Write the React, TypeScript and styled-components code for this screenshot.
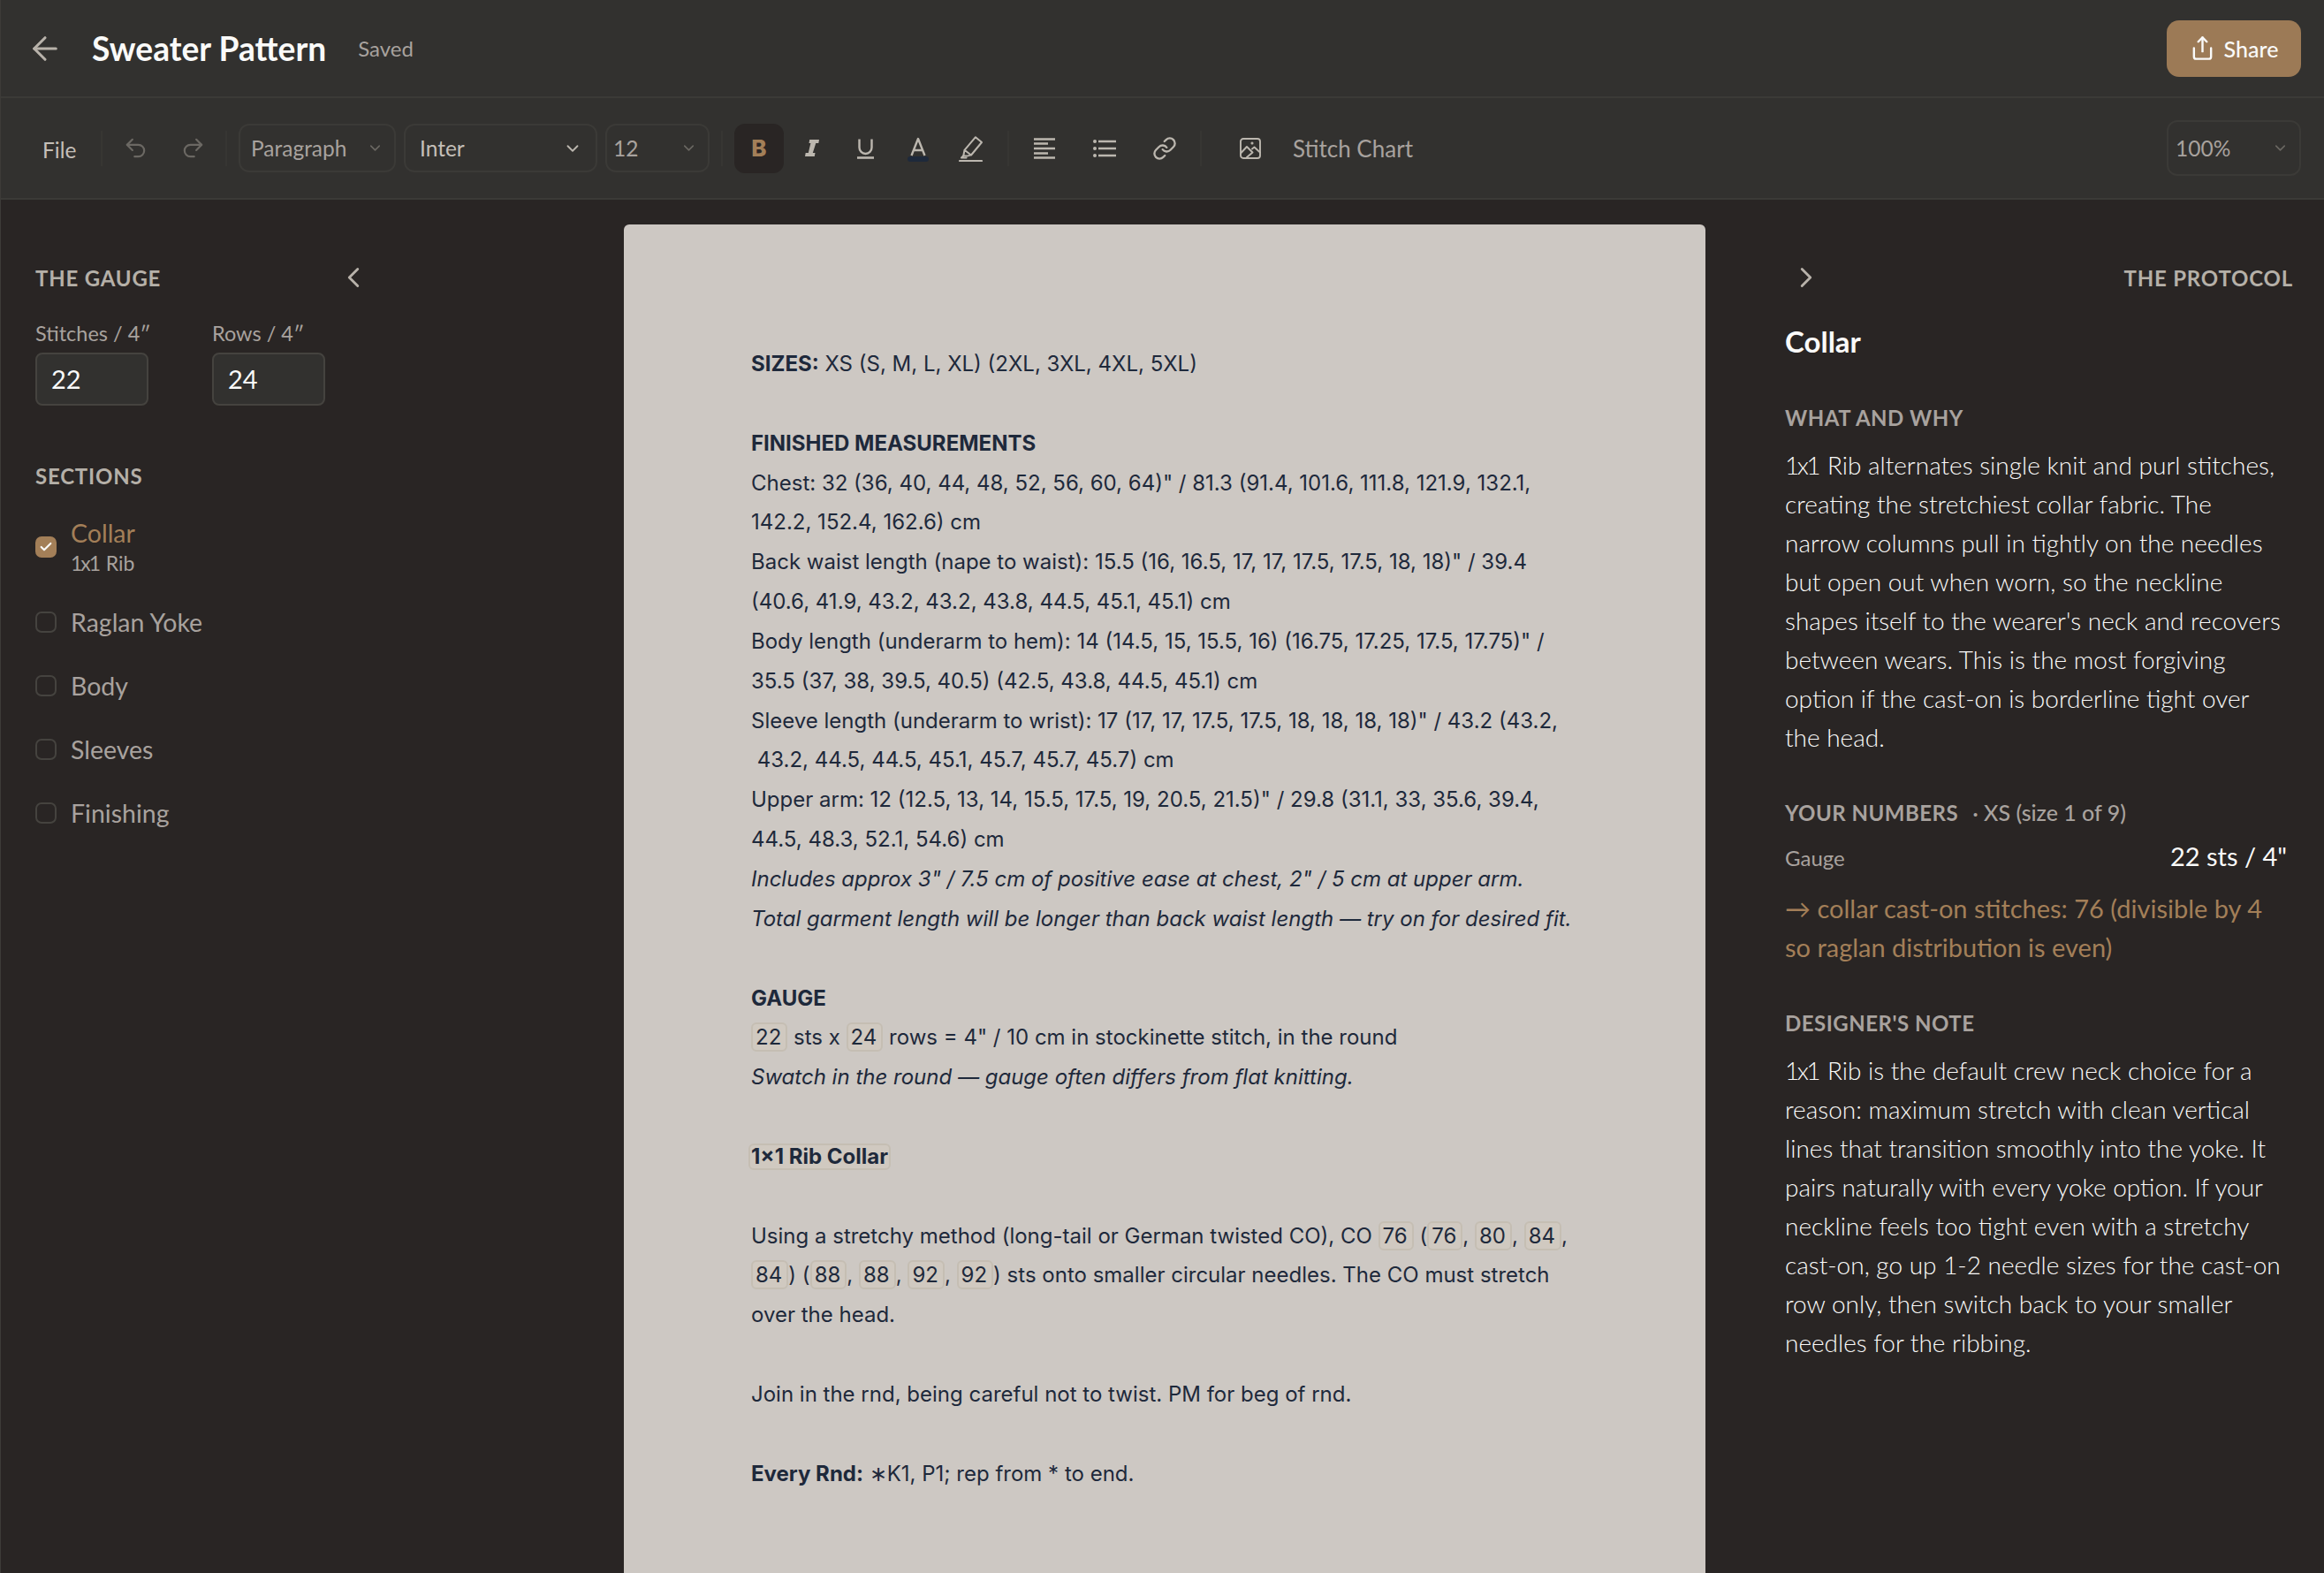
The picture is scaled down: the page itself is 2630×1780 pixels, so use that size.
import * as React from "react";
import styled, { createGlobalStyle } from "styled-components";
import {
  ArrowLeft,
  Check,
  ChevronDown,
  ChevronLeft,
  ChevronRight,
  Link,
  Redo2,
  Share,
  Undo2,
} from "lucide-react";

const UI_FONT = `Lato, "Noto Sans", sans-serif`;
const ACCENT = "#a37f58";

const GlobalStyle = createGlobalStyle`
  html, body {
    margin: 0;
    padding: 0;
    height: 100%;
    background: #292524;
    overflow: hidden;
  }
  * {
    box-sizing: border-box;
  }
`;

const Page = styled.div`
  height: 100vh;
  display: flex;
  flex-direction: column;
  overflow: hidden;
  border-left: 1px solid #3d3b38;
  font-family: ${UI_FONT};
  color: #e7e5e4;
`;

const Header = styled.header`
  height: 111px;
  flex: none;
  display: flex;
  align-items: center;
  padding: 0 26px 0 29px;
  background: #32312f;
  border-bottom: 2px solid #3b3a37;
`;

const BackButton = styled.span`
  display: flex;
  color: #b8b2aa;
  margin-right: 32px;
`;

const Title = styled.h1`
  margin: 0;
  font-size: 37.2px;
  font-weight: 700;
  color: #fafaf9;
`;

const SavedLabel = styled.span`
  margin-left: 36px;
  font-size: 24px;
  color: #a8a29e;
`;

const Spacer = styled.div`
  flex: 1;
`;

const ShareButton = styled.button`
  width: 152px;
  height: 64px;
  border: none;
  border-radius: 14px;
  background: #9c7a56;
  color: #fafaf9;
  display: flex;
  align-items: center;
  justify-content: center;
  gap: 10px;
  font-family: ${UI_FONT};
  font-size: 25px;
  font-weight: 500;
`;

const Toolbar = styled.div`
  height: 115px;
  flex: none;
  display: flex;
  align-items: center;
  padding: 0 26px 0 0;
  background: #32312f;
  border-bottom: 2px solid #3b3a37;
`;

const FileButton = styled.span`
  width: 113px;
  padding-left: 47px;
  font-size: 24.5px;
  color: #c4bfb8;
  position: relative;
  top: 2px;
`;

const Separator = styled.span<{ $gapLeft?: number; $gapRight?: number }>`
  width: 2px;
  height: 40px;
  flex: none;
  background: #373633;
  margin: 0 ${(p) => p.$gapRight ?? 0}px 0 ${(p) => p.$gapLeft ?? 0}px;
`;

const HistoryGroup = styled.div`
  display: flex;
  gap: 9px;
  margin-left: 9px;
  margin-right: 9px;
`;

const ToolGroup = styled.div<{ $gap: number }>`
  display: flex;
  align-items: center;
  gap: ${(p) => p.$gap}px;
`;

const ToolButton = styled.span<{ $active?: boolean; $dim?: boolean }>`
  width: 56px;
  height: 56px;
  flex: none;
  display: flex;
  align-items: center;
  justify-content: center;
  border-radius: 12px;
  background: ${(p) => (p.$active ? "#292524" : "transparent")};
  color: ${(p) => (p.$active ? ACCENT : p.$dim ? "#6b6863" : "#bcb7af")};
`;

const BoldGlyph = styled.span`
  font-family: "Inter", sans-serif;
  font-size: 26px;
  font-weight: 800;
`;

const SelectBox = styled.div<{ $width: number; $height?: number; $bright?: boolean; $pad: number }>`
  width: ${(p) => p.$width}px;
  height: ${(p) => p.$height ?? 55}px;
  flex: none;
  display: flex;
  align-items: center;
  justify-content: space-between;
  padding: 0 ${(p) => (p.$bright ? 15 : 12)}px 0 ${(p) => p.$pad}px;
  border: 2px solid #3b3a37;
  border-radius: 12px;
  font-size: 24.5px;
  color: ${(p) => (p.$bright ? "#c4bfb8" : "#a8a29e")};
  svg {
    color: ${(p) => (p.$bright ? "#bcb7af" : "#6b6863")};
  }
`;

const SelectRow = styled.div`
  display: flex;
  gap: 9px;
  margin-right: 13px;
`;

const ChartLabel = styled.span`
  margin-left: 20px;
  font-size: 26px;
  color: #a8a29e;
`;

const Workspace = styled.div`
  flex: 1;
  min-height: 0;
  display: flex;
  background: #292524;
`;

const LeftPanel = styled.aside`
  width: 705px;
  flex: none;
  padding: 73px 0 0 39px;
`;

const PanelHead = styled.div`
  display: flex;
  align-items: center;
  justify-content: space-between;
  height: 30px;
`;

const LeftHead = styled(PanelHead)`
  width: 379px;
`;

const PanelTitle = styled.h2`
  margin: 0;
  font-size: 24px;
  font-weight: 700;
  letter-spacing: 0.8px;
  color: #b5b0a8;
`;

const ChevronSlot = styled.span`
  display: flex;
  color: #b8b2aa;
`;

const GaugeRow = styled.div`
  display: flex;
  gap: 72px;
  margin-top: 33px;
`;

const GaugeField = styled.label`
  display: flex;
  flex-direction: column;
  width: 128px;
  font-size: 23.5px;
  color: #a8a29e;
  line-height: 30px;
  white-space: nowrap;
`;

const GaugeInput = styled.div`
  height: 60px;
  margin-top: 7px;
  padding-left: 16px;
  display: flex;
  align-items: center;
  background: #32312f;
  border: 2px solid #45433f;
  border-radius: 8px;
  font-size: 29px;
  color: #fafaf9;
`;

const SectionsTitle = styled(PanelTitle)`
  margin-top: 65px;
  line-height: 30px;
`;

const SectionList = styled.ul`
  list-style: none;
  margin: 23px 0 0;
  padding: 0;
  display: flex;
  flex-direction: column;
`;

const SectionItem = styled.li<{ $tall?: boolean }>`
  display: flex;
  align-items: center;
  gap: 16px;
  height: ${(p) => (p.$tall ? 84 : 72)}px;
  margin-bottom: ${(p) => (p.$tall ? 7 : 0)}px;
`;

const CheckBox = styled.span<{ $on?: boolean }>`
  width: 24px;
  height: 24px;
  flex: none;
  display: flex;
  align-items: center;
  justify-content: center;
  border-radius: 7px;
  background: ${(p) => (p.$on ? ACCENT : "transparent")};
  border: ${(p) => (p.$on ? "none" : "2px solid #45433f")};
  color: #fafaf9;
`;

const SectionName = styled.div<{ $on?: boolean }>`
  font-size: 28.5px;
  line-height: 36px;
  color: ${(p) => (p.$on ? ACCENT : "#a8a29e")};
`;

const SectionSub = styled.div`
  font-size: 23px;
  line-height: 32px;
  color: #a8a29e;
`;

// the 1s in the reference face are much narrower than Lato's
const OneByOne = styled.span`
  letter-spacing: -0.09em;
  margin-right: 0.08em;
`;

const Middle = styled.main`
  width: 1224px;
  flex: none;
  padding-top: 28px;
`;

const Paper = styled.article`
  min-height: 1700px;
  padding: 136px 80px 0 144px;
  background: #cdc8c3;
  border-radius: 6px 6px 0 0;
  font-family: Inter, sans-serif;
  font-size: 24px;
  line-height: 44.85px;
  color: #1e293b;
`;

const DocLine = styled.div<{ $em?: boolean; $gap?: boolean }>`
  white-space: pre;
  font-style: ${(p) => (p.$em ? "italic" : "normal")};
  margin-top: ${(p) => (p.$gap ? "44.85px" : "0")};
`;

const DocHeading = styled.strong`
  font-weight: 700;
`;

const Chip = styled.span`
  display: inline-block;
  line-height: 29px;
  padding: 0 5px 0 3px;
  background: #d0c9c0;
  border: 2px solid #c5beb3;
  border-radius: 6px;
`;

const HeadingChip = styled(Chip)`
  margin-left: -3px;
  font-weight: 700;
  padding: 0 1px 0 1px;
  line-height: 26px;
`;

const RightPanel = styled.aside`
  flex: 1;
  min-width: 0;
  padding: 73px 35px 0 90px;
`;

const RightHead = styled(PanelHead)`
  margin-left: 5px;
`;

const TopicTitle = styled.h3`
  margin: 37px 0 0;
  font-size: 33px;
  line-height: 40px;
  font-weight: 700;
  color: #fafaf9;
`;

const NoteLabel = styled.h4<{ $top: number }>`
  margin: ${(p) => p.$top}px 0 0;
  font-size: 24px;
  line-height: 30px;
  font-weight: 700;
  letter-spacing: 0.5px;
  color: #a8a29e;
`;

const NoteBody = styled.p<{ $accent?: boolean; $top: number }>`
  margin: ${(p) => p.$top}px 0 0;
  font-size: ${(p) => (p.$accent ? 29 : 28)}px;
  font-weight: ${(p) => (p.$accent ? 400 : 300)};
  line-height: 44px;
  color: ${(p) => (p.$accent ? ACCENT : "#fafaf9")};
`;

const NoteLine = styled.span`
  display: block;
  white-space: nowrap;
`;

const NumbersMeta = styled.span`
  margin-left: 16px;
  letter-spacing: 0;
  font-size: 25px;
  font-weight: 500;
`;

const GaugeReadout = styled.div`
  display: flex;
  justify-content: space-between;
  align-items: baseline;
  margin: 16px 7px 0 0;
  line-height: 36px;
  font-size: 24px;
  color: #a8a29e;
`;

const GaugeValue = styled.span`
  font-size: 29px;
  color: #fafaf9;
`;

const Icon = styled.svg`
  display: block;
  fill: none;
  stroke: currentColor;
  stroke-linecap: round;
  stroke-linejoin: round;
`;

const ItalicIcon = () => (
  <Icon width={16} height={19} viewBox="0 0 16 19" style={{ stroke: "none", fill: "currentColor" }}>
    <path d="M5.2 0H16l-.7 4h-3L8.8 15h2.7l-.7 4H0l.7-4h3.1L6.4 4H4.5z" />
  </Icon>
);

const UnderlineIcon = () => (
  <Icon width={19} height={24} viewBox="0 0 19 24">
    <path d="M2.5 1.5v9.5a7 7 0 0 0 14 0V1.5" strokeWidth={2.4} strokeLinecap="butt" />
    <path d="M0 22.5h19" strokeWidth={2.6} strokeLinecap="butt" />
  </Icon>
);

const ColorIcon = () => (
  <Icon width={24} height={30} viewBox="0 0 24 30">
    <path d="M4.5 23 12 4l7.5 19M7 17h10" strokeWidth={2.4} strokeLinecap="butt" />
    <rect x={0} y={24} width={24} height={6} rx={3} fill="#1e293b" stroke="none" />
  </Icon>
);

const HighlightIcon = () => (
  <Icon width={28} height={30} viewBox="0 0 28 30">
    <path d="M19 2.2 26 8 14 22.5l-7.5-5.7zM6.5 16.8l-1.2 6.4 4 .4 4.7-1.2" strokeWidth={2} />
    <path d="M5.3 23.2 3 25.5h5.5" strokeWidth={2} />
    <path d="M1 29h25" strokeWidth={2.2} />
  </Icon>
);

const AlignIcon = () => (
  <Icon width={24} height={24} viewBox="0 0 24 24" strokeWidth={2.6}>
    <path strokeLinecap="butt" d="M0 1.5h24M0 6.5h16M0 12h24M0 17.5h16M0 22.5h24" />
  </Icon>
);

const ListIcon = () => (
  <Icon width={26} height={22} viewBox="0 0 26 22" strokeWidth={2.6}>
    <path strokeLinecap="butt" d="M6 3h20M6 11h20M6 19h20" />
    <circle cx={2} cy={3} r={2} fill="currentColor" stroke="none" />
    <circle cx={2} cy={11} r={2} fill="currentColor" stroke="none" />
    <circle cx={2} cy={19} r={2} fill="currentColor" stroke="none" />
  </Icon>
);

const PictureIcon = () => (
  <Icon width={24} height={24} viewBox="0 0 24 24" strokeWidth={1.9}>
    <rect x={1} y={1} width={22} height={22} rx={3} />
    <path d="M1 17.5 8 10l6.5 6.5M14 12.5l2.5-2 6.5 6M8 22l6.5-5.5" />
    <circle cx={14} cy={6} r={0.6} fill="currentColor" />
  </Icon>
);

const Select = ({
  label,
  width,
  pad,
  bright,
  height,
}: {
  label: string;
  width: number;
  pad: number;
  bright?: boolean;
  height?: number;
}) => (
  <SelectBox $width={width} $pad={pad} $bright={bright} $height={height}>
    {label}
    <ChevronDown size={bright ? 22 : 19} strokeWidth={2} />
  </SelectBox>
);

const whatAndWhy = [
  "alternates single knit and purl stitches,",
  "creating the stretchiest collar fabric. The",
  "narrow columns pull in tightly on the needles",
  "but open out when worn, so the neckline",
  "shapes itself to the wearer's neck and recovers",
  "between wears. This is the most forgiving",
  "option if the cast-on is borderline tight over",
  "the head.",
];

const designerNote = [
  "is the default crew neck choice for a",
  "reason: maximum stretch with clean vertical",
  "lines that transition smoothly into the yoke. It",
  "pairs naturally with every yoke option. If your",
  "neckline feels too tight even with a stretchy",
  "cast-on, go up 1-2 needle sizes for the cast-on",
  "row only, then switch back to your smaller",
  "needles for the ribbing.",
];

const sections = ["Raglan Yoke", "Body", "Sleeves", "Finishing"];

const RibLines = ({ lines }: { lines: string[] }) => (
  <>
    {lines.map((line, i) => (
      <NoteLine key={line}>
        {i === 0 && <OneByOne>1x1</OneByOne>}
        {i === 0 && " Rib "}
        {line}
      </NoteLine>
    ))}
  </>
);

const App: React.FC = () => {
  return (
    <Page>
      <GlobalStyle />
      <Header>
        <BackButton>
          <ArrowLeft size={42} strokeWidth={1.8} />
        </BackButton>
        <Title>Sweater Pattern</Title>
        <SavedLabel>Saved</SavedLabel>
        <Spacer />
        <ShareButton>
          <Share size={29} strokeWidth={2} />
          Share
        </ShareButton>
      </Header>

      <Toolbar>
        <FileButton>File</FileButton>
        <Separator />
        <HistoryGroup>
          <ToolButton $dim>
            <Undo2 size={29} strokeWidth={1.8} />
          </ToolButton>
          <ToolButton $dim>
            <Redo2 size={29} strokeWidth={1.8} />
          </ToolButton>
        </HistoryGroup>
        <Separator $gapRight={13} />
        <SelectRow>
          <Select label="Paragraph" width={178} pad={12} />
          <Select label="Inter" width={219} pad={16} bright />
          <Select label="12" width={118} pad={7} />
        </SelectRow>
        <Separator $gapRight={13} />
        <ToolGroup $gap={4}>
          <ToolButton $active>
            <BoldGlyph>B</BoldGlyph>
          </ToolButton>
          <ToolButton>
            <ItalicIcon />
          </ToolButton>
          <ToolButton>
            <UnderlineIcon />
          </ToolButton>
          <ToolButton>
            <ColorIcon />
          </ToolButton>
          <ToolButton>
            <HighlightIcon />
          </ToolButton>
        </ToolGroup>
        <Separator $gapLeft={13} $gapRight={12} />
        <ToolGroup $gap={12}>
          <ToolButton>
            <AlignIcon />
          </ToolButton>
          <ToolButton>
            <ListIcon />
          </ToolButton>
          <ToolButton>
            <Link size={28} strokeWidth={2} />
          </ToolButton>
        </ToolGroup>
        <Separator $gapLeft={12} $gapRight={27} />
        <ToolButton>
          <PictureIcon />
        </ToolButton>
        <ChartLabel>Stitch Chart</ChartLabel>
        <Spacer />
        <Select label="100%" width={152} height={63} pad={8} />
      </Toolbar>

      <Workspace>
        <LeftPanel>
          <LeftHead>
            <PanelTitle>THE GAUGE</PanelTitle>
            <ChevronSlot>
              <ChevronLeft size={38} strokeWidth={1.8} />
            </ChevronSlot>
          </LeftHead>
          <GaugeRow>
            <GaugeField>
              Stitches / 4″
              <GaugeInput>22</GaugeInput>
            </GaugeField>
            <GaugeField>
              Rows / 4″
              <GaugeInput>24</GaugeInput>
            </GaugeField>
          </GaugeRow>
          <SectionsTitle>SECTIONS</SectionsTitle>
          <SectionList>
            <SectionItem $tall>
              <CheckBox $on>
                <Check size={16} strokeWidth={3.2} />
              </CheckBox>
              <div>
                <SectionName $on>Collar</SectionName>
                <SectionSub>
                  <OneByOne>1x1</OneByOne> Rib
                </SectionSub>
              </div>
            </SectionItem>
            {sections.map((name) => (
              <SectionItem key={name}>
                <CheckBox />
                <SectionName>{name}</SectionName>
              </SectionItem>
            ))}
          </SectionList>
        </LeftPanel>

        <Middle>
          <Paper>
            <DocLine>
              <DocHeading>SIZES:</DocHeading> XS (S, M, L, XL) (2XL, 3XL, 4XL, 5XL)
            </DocLine>
            <DocLine $gap>
              <DocHeading>FINISHED MEASUREMENTS</DocHeading>
            </DocLine>
            <DocLine>Chest: 32 (36, 40, 44, 48, 52, 56, 60, 64)" / 81.3 (91.4, 101.6, 111.8, 121.9, 132.1,</DocLine>
            <DocLine>142.2, 152.4, 162.6) cm</DocLine>
            <DocLine>Back waist length (nape to waist): 15.5 (16, 16.5, 17, 17, 17.5, 17.5, 18, 18)" / 39.4</DocLine>
            <DocLine>(40.6, 41.9, 43.2, 43.2, 43.8, 44.5, 45.1, 45.1) cm</DocLine>
            <DocLine>Body length (underarm to hem): 14 (14.5, 15, 15.5, 16) (16.75, 17.25, 17.5, 17.75)" /</DocLine>
            <DocLine>35.5 (37, 38, 39.5, 40.5) (42.5, 43.8, 44.5, 45.1) cm</DocLine>
            <DocLine>Sleeve length (underarm to wrist): 17 (17, 17, 17.5, 17.5, 18, 18, 18, 18)" / 43.2 (43.2,</DocLine>
            <DocLine> 43.2, 44.5, 44.5, 45.1, 45.7, 45.7, 45.7) cm</DocLine>
            <DocLine>Upper arm: 12 (12.5, 13, 14, 15.5, 17.5, 19, 20.5, 21.5)" / 29.8 (31.1, 33, 35.6, 39.4,</DocLine>
            <DocLine>44.5, 48.3, 52.1, 54.6) cm</DocLine>
            <DocLine $em>Includes approx 3" / 7.5 cm of positive ease at chest, 2" / 5 cm at upper arm.</DocLine>
            <DocLine $em>Total garment length will be longer than back waist length — try on for desired fit.</DocLine>
            <DocLine $gap>
              <DocHeading>GAUGE</DocHeading>
            </DocLine>
            <DocLine>
              <Chip>22</Chip> sts x <Chip>24</Chip> rows = 4" / 10 cm in stockinette stitch, in the round
            </DocLine>
            <DocLine $em>Swatch in the round — gauge often differs from flat knitting.</DocLine>
            <DocLine $gap>
              <HeadingChip>1×1 Rib Collar</HeadingChip>
            </DocLine>
            <DocLine $gap>
              Using a stretchy method (long-tail or German twisted CO), CO <Chip>76</Chip> (<Chip>76</Chip>,{" "}
              <Chip>80</Chip>, <Chip>84</Chip>,
            </DocLine>
            <DocLine>
              <Chip>84</Chip>) (<Chip>88</Chip>, <Chip>88</Chip>, <Chip>92</Chip>, <Chip>92</Chip>) sts onto smaller
              circular needles. The CO must stretch
            </DocLine>
            <DocLine>over the head.</DocLine>
            <DocLine $gap>Join in the rnd, being careful not to twist. PM for beg of rnd.</DocLine>
            <DocLine $gap>
              <DocHeading>Every Rnd:</DocHeading> ∗K1, P1; rep from * to end.
            </DocLine>
          </Paper>
        </Middle>

        <RightPanel>
          <RightHead>
            <ChevronSlot>
              <ChevronRight size={38} strokeWidth={1.8} />
            </ChevronSlot>
            <PanelTitle>THE PROTOCOL</PanelTitle>
          </RightHead>
          <TopicTitle>Collar</TopicTitle>
          <NoteLabel $top={52}>WHAT AND WHY</NoteLabel>
          <NoteBody $top={16}>
            <RibLines lines={whatAndWhy} />
          </NoteBody>
          <NoteLabel $top={48}>
            YOUR NUMBERS<NumbersMeta>· XS (size 1 of 9)</NumbersMeta>
          </NoteLabel>
          <GaugeReadout>
            Gauge
            <GaugeValue>22 sts / 4"</GaugeValue>
          </GaugeReadout>
          <NoteBody $accent $top={17}>
            <NoteLine>→ collar cast-on stitches: 76 (divisible by 4</NoteLine>
            <NoteLine>so raglan distribution is even)</NoteLine>
          </NoteBody>
          <NoteLabel $top={49}>DESIGNER'S NOTE</NoteLabel>
          <NoteBody $top={16}>
            <RibLines lines={designerNote} />
          </NoteBody>
        </RightPanel>
      </Workspace>
    </Page>
  );
};

export default App;
